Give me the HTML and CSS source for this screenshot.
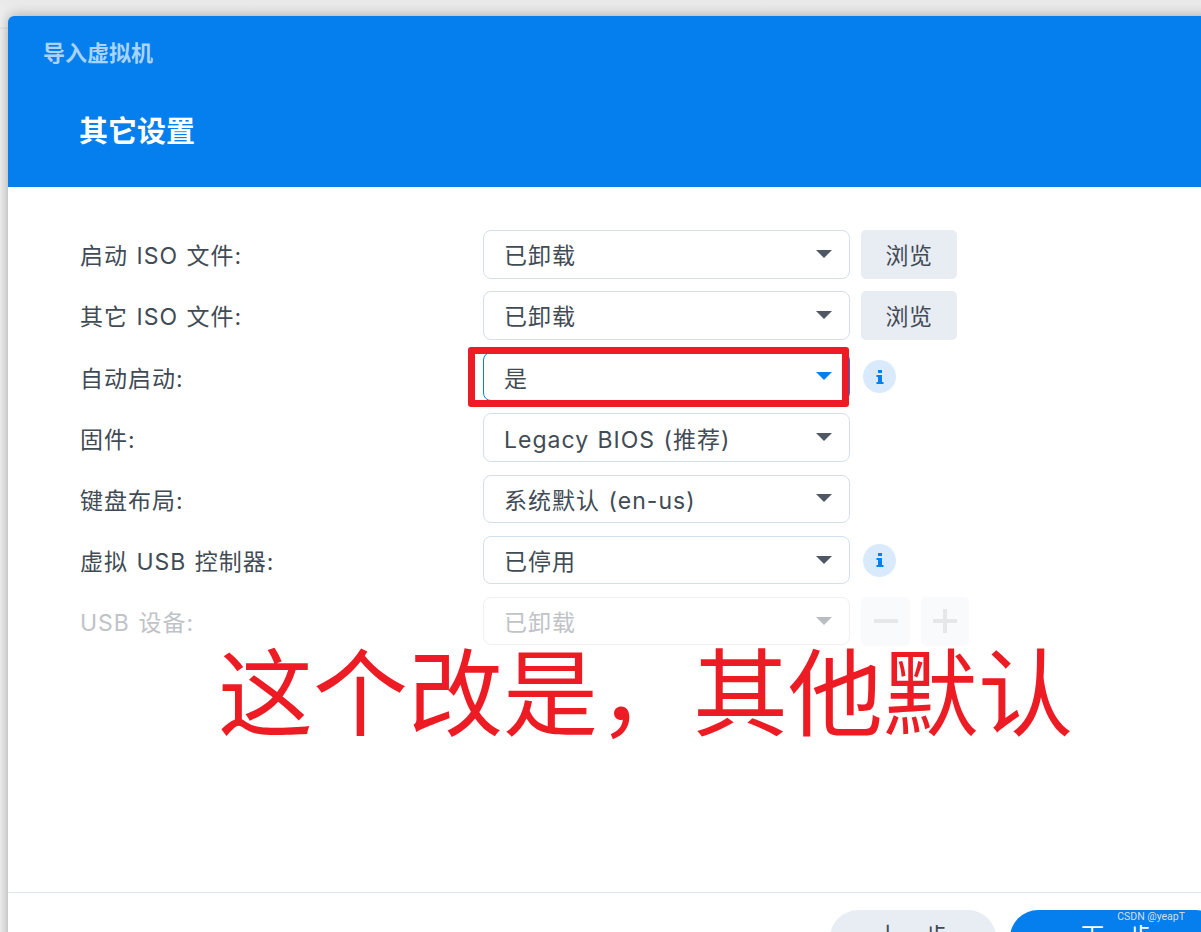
FILE: index.html
```html
<!DOCTYPE html>
<html lang="zh-CN">
<head>
    <meta charset="UTF-8">
    <meta name="viewport" content="width=device-width, initial-scale=1.0">
    <title>导入虚拟机</title>
    <link rel="stylesheet" href="styles.css">
</head>
<body>
    <div class="dialog">
        <header class="dialog-header">
            <div class="dialog-title">导入虚拟机</div>
            <h1 class="step-title">其它设置</h1>
        </header>
        <main class="dialog-body">
            <div class="form-row">
                <label>启动 ISO 文件:</label>
                <div class="select"><span>已卸载</span><i class="caret"></i></div>
                <button class="browse-btn">浏览</button>
            </div>
            <div class="form-row">
                <label>其它 ISO 文件:</label>
                <div class="select"><span>已卸载</span><i class="caret"></i></div>
                <button class="browse-btn">浏览</button>
            </div>
            <div class="form-row">
                <label>自动启动:</label>
                <div class="select focused"><span>是</span><i class="caret"></i></div>
                <span class="info-icon">
                    <svg width="12" height="16" viewBox="0 0 12 16"><path d="M4 1h4v3H4zM2.5 6H8v7h1.5v2h-7v-2H4V8H2.5z" fill="#057fee"/></svg>
                </span>
            </div>
            <div class="form-row">
                <label>固件:</label>
                <div class="select"><span>Legacy BIOS (推荐)</span><i class="caret"></i></div>
            </div>
            <div class="form-row">
                <label>键盘布局:</label>
                <div class="select"><span>系统默认 (en-us)</span><i class="caret"></i></div>
            </div>
            <div class="form-row">
                <label>虚拟 USB 控制器:</label>
                <div class="select"><span>已停用</span><i class="caret"></i></div>
                <span class="info-icon">
                    <svg width="12" height="16" viewBox="0 0 12 16"><path d="M4 1h4v3H4zM2.5 6H8v7h1.5v2h-7v-2H4V8H2.5z" fill="#057fee"/></svg>
                </span>
            </div>
            <div class="form-row disabled">
                <label>USB 设备:</label>
                <div class="select"><span>已卸载</span><i class="caret"></i></div>
                <span class="step-btn"><svg width="24" height="24" viewBox="0 0 24 24"><path d="M0 10h24v4H0z" fill="#e6e7e9"/></svg></span>
                <span class="step-btn"><svg width="24" height="24" viewBox="0 0 24 24"><path d="M10 0h4v10h10v4H14v10h-4V14H0v-4h10z" fill="#e6e7e9"/></svg></span>
            </div>
        </main>
        <footer class="dialog-footer">
            <button class="pill-btn">上一步</button>
            <button class="pill-btn primary">下一步</button>
        </footer>
    </div>

    <!-- annotations drawn over the screenshot -->
    <div class="mark-box"></div>
    <div class="mark-text">这个改是，其他默认</div>
    <div class="watermark">CSDN @yeapT</div>
</body>
</html>
```

FILE: styles.css
```css
:root {
    --blue: #057fee;
    --text-color: #414b55;
    --border-color: #d3dfeb;
    --btn-bg: #e8ecf3;
    --mark-red: #ed1c24;
    --font-main: Inter, "Noto Sans CJK SC", "Noto Sans", sans-serif;
}
* { box-sizing: border-box; }
html, body {
    height: 100%;
}
body {
    margin: 0;
    height: 932px;
    overflow: hidden;
    position: relative;
    font-family: var(--font-main);
    color: var(--text-color);
    background: linear-gradient(#e9e9e9 0, #f6f6f6 27px, #dfe3e8 28px, #f3f3f3 29px);
    padding: 16px 0 0 8px;
}
.dialog {
    width: 1240px;
    height: 960px;
    background: #fff;
    border-radius: 6px 0 0 0;
    box-shadow: 0 0 14px rgba(0,0,0,0.35);
    display: flex;
    flex-direction: column;
}
.dialog-header {
    height: 171px;
    flex: none;
    background: var(--blue);
    border-radius: 6px 0 0 0;
    padding: 21px 0 0 35px;
}
.dialog-title {
    font-size: 22px;
    line-height: 32px;
    font-weight: 700;
    color: #a9d3f9;
}
.step-title {
    margin: 42px 0 0 36px;
    font-size: 29px;
    line-height: 42px;
    font-weight: 700;
    color: #fff;
}
.dialog-body {
    height: 705px;
    flex: none;
    padding: 43px 0 0 72px;
    display: flex;
    flex-direction: column;
    gap: 12.67px;
}
.form-row {
    display: flex;
    align-items: center;
    height: 48.5px;
}
.form-row label {
    width: 403px;
    flex: none;
    font-size: 23px;
    letter-spacing: 1px;
    word-spacing: 1px;
}
.select {
    width: 367px;
    height: 100%;
    flex: none;
    display: flex;
    align-items: center;
    justify-content: space-between;
    padding: 0 17px 0 20px;
    border: 1px solid var(--border-color);
    border-radius: 8px;
    background: #fff;
    font-size: 23px;
    letter-spacing: 1px;
    word-spacing: 1px;
}
.caret {
    width: 0;
    height: 0;
    border-left: 8px solid transparent;
    border-right: 8px solid transparent;
    border-top: 8px solid #4f5863;
    margin-top: -1px;
}
.select.focused { border-color: var(--blue); }
.select.focused .caret { border-top-color: var(--blue); }
.browse-btn {
    width: 96px;
    height: 49px;
    margin-left: 11px;
    border: none;
    border-radius: 5px;
    background: var(--btn-bg);
    color: var(--text-color);
    font-family: inherit;
    font-size: 23px;
    letter-spacing: 0.4px;
    padding: 0;
}
.info-icon {
    width: 33px;
    height: 33px;
    margin-left: 13px;
    border-radius: 50%;
    background: #d9eafc;
    display: flex;
    align-items: center;
    justify-content: center;
}
.disabled label,
.disabled .select { color: #bfc3c8; }
.disabled .select { border-color: #eef0f3; }
.disabled .caret { border-top-color: #b9bdc2; }
.step-btn {
    width: 49px;
    height: 49px;
    margin-left: 11px;
    border-radius: 5px;
    background: #f9fafc;
    display: flex;
    align-items: center;
    justify-content: center;
}
.step-btn + .step-btn { width: 48px; margin-left: 11px; }
.dialog-footer {
    flex: none;
    height: 84px;
    border-top: 1px solid #e2e8ee;
    padding: 17px 0 0 822px;
    display: flex;
    gap: 14px;
}
.pill-btn {
    width: 166px;
    height: 56px;
    border: none;
    border-radius: 28px;
    background: var(--btn-bg);
    color: var(--text-color);
    font-family: inherit;
    font-size: 23px;
    letter-spacing: 1px;
    padding: 0 0 8px;
}
.pill-btn.primary {
    background: var(--blue);
    color: #fff;
    width: 214px;
}
.mark-box {
    position: absolute;
    left: 468px;
    top: 347px;
    width: 381px;
    height: 60px;
    border: 7px solid var(--mark-red);
    border-radius: 3px;
}
.mark-text {
    position: absolute;
    left: 218px;
    top: 648px;
    font-family: "Noto Sans CJK SC", sans-serif;
    font-size: 95px;
    line-height: 80px;
    color: var(--mark-red);
    white-space: nowrap;
}
.watermark {
    position: absolute;
    right: 16px;
    top: 910px;
    font-family: Roboto, sans-serif;
    font-size: 10.5px;
    line-height: 14px;
    color: #d5dde6;
}
```
